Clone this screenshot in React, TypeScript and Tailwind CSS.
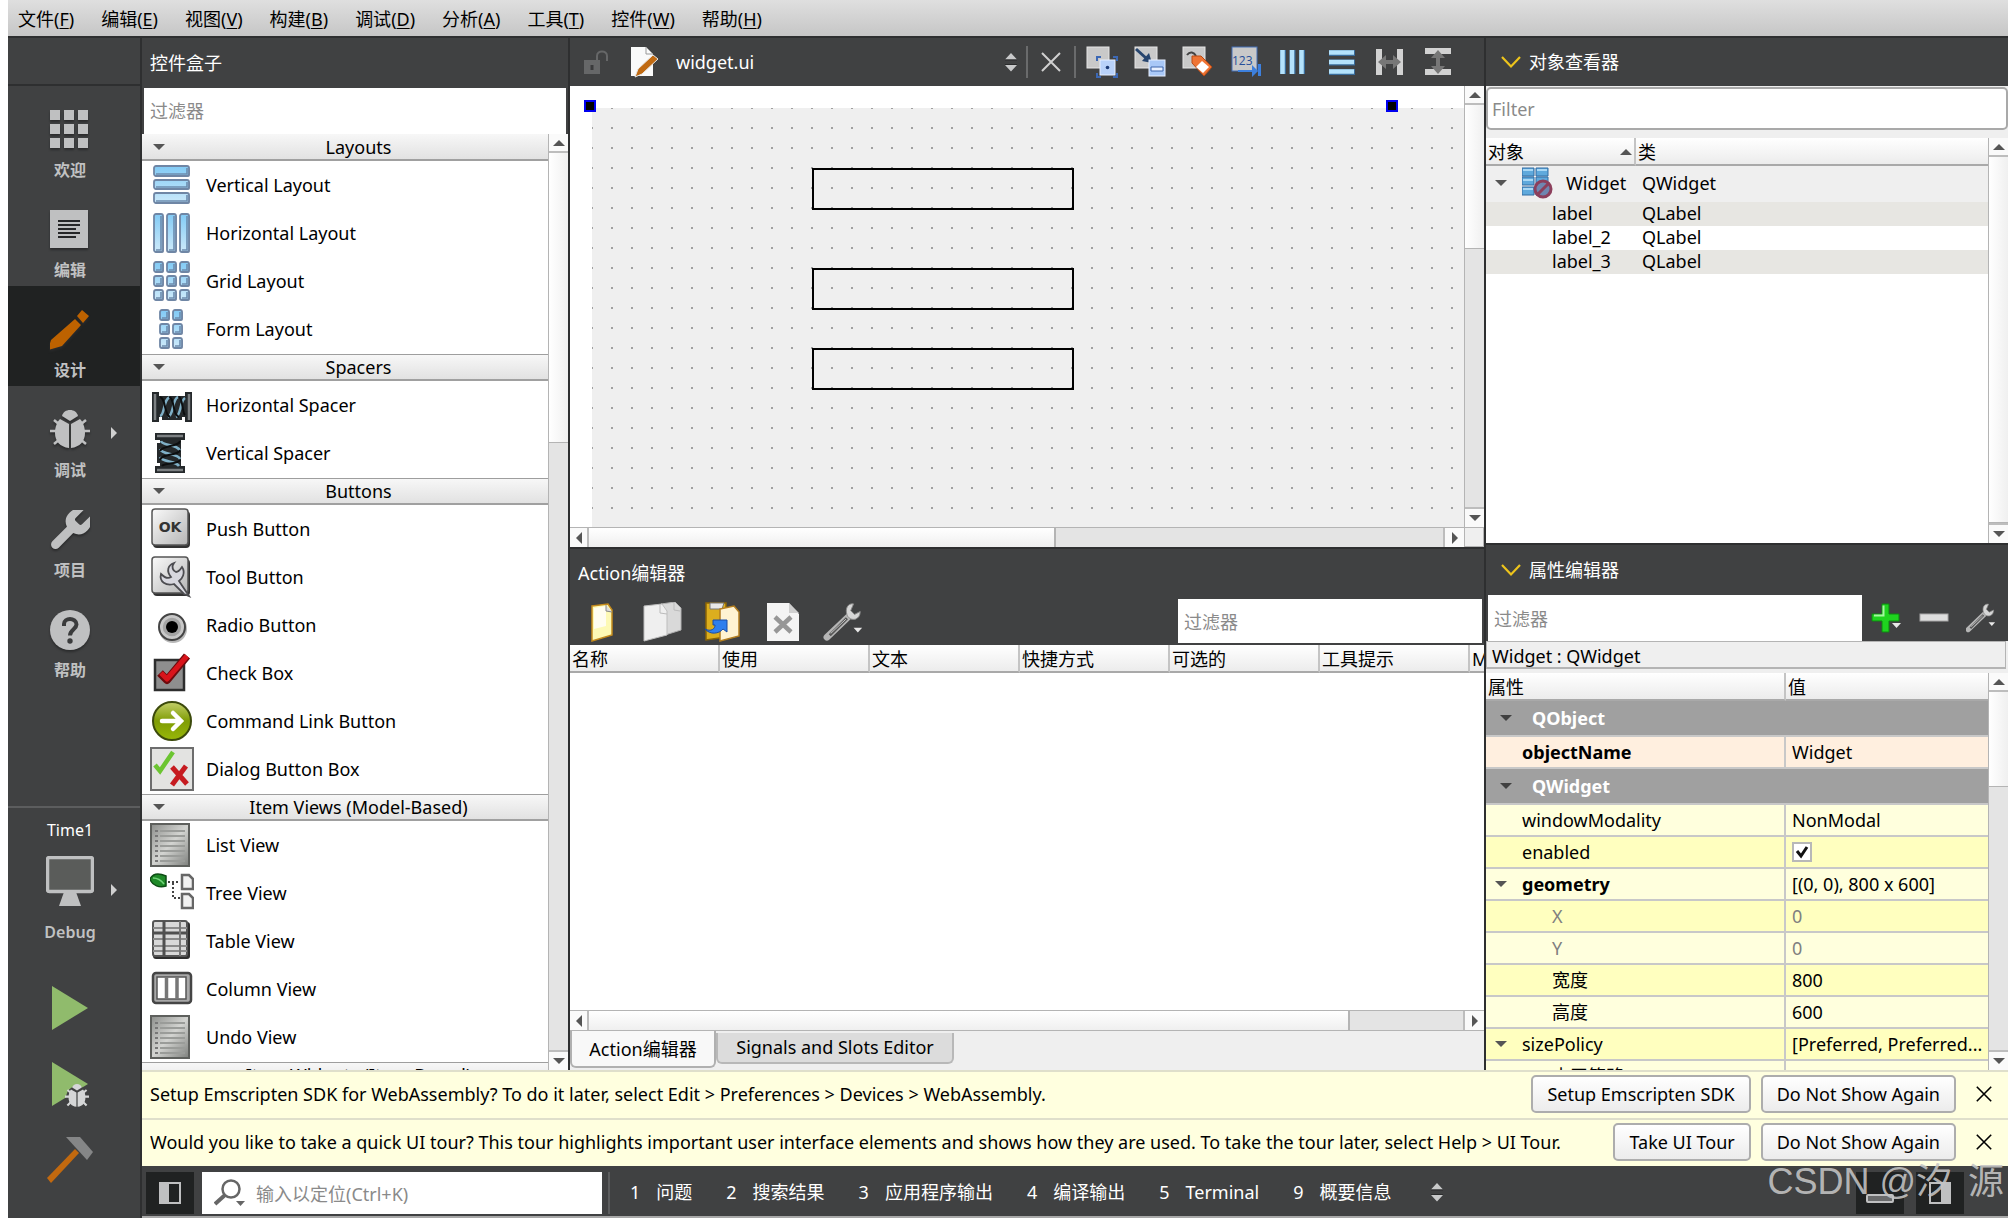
import { useState, type ReactNode } from "react";
import clsx from "clsx";

const menus = [
  ["文件", "F"],
  ["编辑", "E"],
  ["视图", "V"],
  ["构建", "B"],
  ["调试", "D"],
  ["分析", "A"],
  ["工具", "T"],
  ["控件", "W"],
  ["帮助", "H"],
];

const outputPanes = [
  ["1", "问题"],
  ["2", "搜索结果"],
  ["3", "应用程序输出"],
  ["4", "编译输出"],
  ["5", "Terminal"],
  ["9", "概要信息"],
];

/* ---------- small arrows ---------- */

function Arrow({ dir, className = "fill-[#555555]" }: { dir: "up" | "down" | "left" | "right"; className?: string }) {
  const points = {
    up: "0,9 12,9 6,3",
    down: "0,3 12,3 6,9",
    left: "9,0 9,12 3,6",
    right: "3,0 3,12 9,6",
  }[dir];

  return (
    <svg viewBox="0 0 12 12" className={clsx("size-3 shrink-0", className)}>
      <polygon points={points} />
    </svg>
  );
}

function UpDown() {
  return (
    <svg viewBox="0 0 12 20" className="h-5 w-3">
      <path d="M0 7.500 6 1l6 6.500zM0 13h12l-6 6.500z" fill="#c8c9ca" />
      <path d="M0 8h12M0 12.500h12" stroke="#2a2b2c" />
    </svg>
  );
}

function Close({ className }: { className?: string }) {
  return (
    <svg viewBox="0 0 20 20" className={className} fill="none" stroke="currentColor" strokeWidth="2">
      <path d="M1 1 19 19M19 1 1 19" />
    </svg>
  );
}

function Chevron() {
  return (
    <svg viewBox="0 0 20 14" className="h-[14px] w-5" fill="none" stroke="#edc41c" strokeWidth="2.200">
      <path d="M1 2 10 11.500 19 2" />
    </svg>
  );
}

/* ---------- scroll bars ---------- */

function VScroll({ thumb, track }: { thumb: number; track: number }) {
  return (
    <div className="flex w-5 shrink-0 flex-col border-l border-[#b4b4b4] bg-[#e4e4e4]">
      <div className="flex h-[19px] items-center justify-center border-b-2 border-[#bdbdbd] bg-[#fafafa]">
        <Arrow dir="up" />
      </div>
      <div className="border-b border-[#b4b4b4] bg-linear-to-r from-white to-[#f0f0f0]" style={{ flex: thumb }} />
      <div style={{ flex: track }} />
      <div className="flex h-5 items-center justify-center border-t-2 border-[#bdbdbd] bg-[#fafafa]">
        <Arrow dir="down" />
      </div>
    </div>
  );
}

function HScroll({ thumb, track, corner }: { thumb: number; track: number; corner?: boolean }) {
  return (
    <div className="flex h-5 shrink-0 border-t border-[#b4b4b4] bg-[#e4e4e4]">
      <div className="flex w-[19px] items-center justify-center border-r-2 border-[#bdbdbd] bg-[#fafafa]">
        <Arrow dir="left" />
      </div>
      <div className="border-r-2 border-[#b4b4b4] bg-linear-to-b from-white to-[#efefef]" style={{ flex: thumb }} />
      <div style={{ flex: track }} />
      <div className="flex w-[21px] items-center justify-center border-l-2 border-[#bdbdbd] bg-[#fafafa]">
        <Arrow dir="right" />
      </div>
      {corner && <div className="w-5 border border-t-0 border-[#b4b4b4] bg-[#efefef]" />}
    </div>
  );
}

/* ---------- mode bar icons ---------- */

const wrenchPath =
  "M14.7 6.3a1 1 0 0 0 0 1.4l1.6 1.6a1 1 0 0 0 1.4 0l3.770-3.770a6 6 0 0 1-7.940 7.940l-6.910 6.910a2.120 2.120 0 0 1-3-3l6.910-6.910a6 6 0 0 1 7.940-7.940l-3.760 3.760z";

const modeIconClass = "size-10 drop-shadow-[0_2px_1px_#2a2b2c]";

function WelcomeIcon() {
  return (
    <svg viewBox="0 0 40 40" className={modeIconClass} fill="#bfc0c1">
      {[0, 14, 28].map((y) => [0, 14, 28].map((x) => <rect key={`${x}-${y}`} x={x} y={y} width="10" height="10" />))}
    </svg>
  );
}

function EditIcon() {
  return (
    <svg viewBox="0 0 40 40" className={modeIconClass}>
      <path fill="#bfc0c1" d="M0 0h38v38H0z" />
      <path d="M8 11h22M8 15h22M8 19h18M8 23h22M8 27h18" stroke="#262728" strokeWidth="2" />
    </svg>
  );
}

function DesignIcon() {
  return (
    <svg viewBox="0 0 40 40" className={modeIconClass} fill="#bd6200">
      <path d="M25 9 31 15 12 36 -2 40 1 30zM27 6 32 0 39 6 33 13z" />
    </svg>
  );
}

function Bug({ className }: { className?: string }) {
  return (
    <svg viewBox="0 0 40 40" className={className}>
      <path d="M4 10 10 15M36 10l-6 5M0 21h8M40 21h-8M4 34l6-5M36 34l-6-5" stroke="#bfc0c1" strokeWidth="2.500" />
      <path d="M12 6C13 2 16 0 20 0s7 2 8 6l-8 5z" fill="#bfc0c1" />
      <path d="M10 9 19 14v24C10 37 5 31 5 23 5 17 7 12 10 9zM30 9 21 14v24c9-1 14-7 14-15 0-6-2-11-5-14z" fill="#bfc0c1" />
    </svg>
  );
}

function ProjectsIcon() {
  return (
    <svg viewBox="2.500 2.500 19 19" className={modeIconClass} fill="#bfc0c1">
      <path d={wrenchPath} />
    </svg>
  );
}

function HelpIcon() {
  return (
    <svg viewBox="0 0 40 40" className={modeIconClass}>
      <circle cx="20" cy="20" r="20" fill="#bfc0c1" />
      <path d="M14 16v-2c0-3 3-5 6-5s6.500 2 6.500 5.500c0 4.500-6.500 5-6.500 11" fill="none" stroke="#3a3b3c" strokeWidth="4" />
      <circle cx="20" cy="31" r="2.700" fill="#3a3b3c" />
    </svg>
  );
}

const modes: { label: string; icon: ReactNode; arrow?: boolean }[] = [
  { label: "欢迎", icon: <WelcomeIcon /> },
  { label: "编辑", icon: <EditIcon /> },
  { label: "设计", icon: <DesignIcon /> },
  { label: "调试", icon: <Bug className={modeIconClass} />, arrow: true },
  { label: "项目", icon: <ProjectsIcon /> },
  { label: "帮助", icon: <HelpIcon /> },
];

/* ---------- widget box icons ---------- */

function Blocks({ cells }: { cells: [number, number, number, number][] }) {
  return (
    <svg viewBox="0 0 44 44" className="size-11">
      <defs>
        <linearGradient id="block" x1="0" y1="0" x2="0" y2="44" gradientUnits="userSpaceOnUse">
          <stop offset="0" stopColor="#7cc8f5" />
          <stop offset="1" stopColor="#d3ecfa" />
        </linearGradient>
      </defs>
      {cells.map(([x, y, w, h]) => (
        <g key={`${x}-${y}`}>
          <rect x={x + 1} y={y + 1} width={w} height={h} rx="2" fill="#9aa6b8" />
          <rect x={x} y={y} width={w} height={h} rx="2" fill="url(#block)" stroke="#6f86a5" strokeWidth="1.800" />
          <path d={`M${x + w - 2} ${y + 2}v${h - 4}h${4 - w}`} fill="none" stroke="#6c8caf" strokeWidth="1.600" />
        </g>
      ))}
    </svg>
  );
}

function SpacerIcon({ vertical }: { vertical?: boolean }) {
  return (
    <svg viewBox="0 0 44 44" className="size-11">
      <g transform={vertical ? "translate(-2 0) rotate(90 22 22)" : "translate(0 2)"}>
        <path d="M2 7h7v4h26V7h7v30h-7v-5h-3v3H12v-3H9v5H2z" fill="#25292b" />
        <path d="M10 31C15 30 13 14 20 12M18 32c6-2 4-18 10-20M26 32c5-2 4-16 9-19" fill="none" stroke="#7fb0c7" strokeWidth="2.500" />
        <path d="M10 12c6 1 4 18 10 20M19 12c6 1 3 18 10 20M29 12c4 1 3 16 6 18" fill="none" stroke="#0c0e0f" strokeWidth="2" />
        <path d="M5 9v26M39 9v26" stroke="#7c8082" strokeWidth="2.500" />
      </g>
    </svg>
  );
}

function GreyButton({ children }: { children: ReactNode }) {
  return (
    <svg viewBox="0 0 44 44" className="size-11">
      <defs>
        <linearGradient id="grey-button" x1="0" y1="0" x2="1" y2="1">
          <stop offset="0" stopColor="#fafafa" />
          <stop offset="1" stopColor="#b5b5b5" />
        </linearGradient>
      </defs>
      <rect x="3" y="4" width="37" height="37" rx="4" fill="#333" />
      <rect x="2" y="2" width="36" height="36" rx="3" fill="url(#grey-button)" stroke="#555" strokeWidth="1.500" />
      {children}
    </svg>
  );
}

function RadioIcon() {
  return (
    <svg viewBox="0 0 44 44" className="size-11">
      <circle cx="23" cy="26" r="14" fill="#b8b8b8" />
      <circle cx="22" cy="24" r="13" fill="#c9c9c9" stroke="#444" strokeWidth="2" />
      <circle cx="22" cy="24" r="10" fill="#a4a4a4" stroke="#c8c8c8" strokeWidth="1.500" />
      <circle cx="22" cy="24" r="6" fill="#000" />
    </svg>
  );
}

function CheckIcon() {
  return (
    <svg viewBox="0 0 44 44" className="size-11">
      <rect x="5" y="9" width="29" height="30" fill="#8e8e8e" stroke="#2d2d2d" strokeWidth="2.500" />
      <path d="M10 22 17 29 37 5" fill="none" stroke="#6e0a0d" strokeWidth="8" strokeLinejoin="round" />
      <path d="M11 22 17 28 37 5" fill="none" stroke="#d9141b" strokeWidth="5" strokeLinejoin="round" />
    </svg>
  );
}

function CommandLinkIcon() {
  return (
    <svg viewBox="0 0 44 44" className="size-11">
      <defs>
        <linearGradient id="command" x1="0" y1="0" x2="0" y2="1">
          <stop offset="0" stopColor="#c4d06a" />
          <stop offset="0.500" stopColor="#7f9c05" />
          <stop offset="1" stopColor="#98b708" />
        </linearGradient>
      </defs>
      <circle cx="22" cy="22" r="19" fill="url(#command)" stroke="#3c4a0c" strokeWidth="2" />
      <path d="M12 22h19M23 14l8 8-8 8" fill="none" stroke="#fff" strokeWidth="4.500" strokeLinecap="round" />
    </svg>
  );
}

function DialogIcon() {
  return (
    <svg viewBox="0 0 44 44" className="size-11">
      <rect x="1" y="1" width="42" height="42" fill="#e3e3e1" stroke="#6d6d6d" strokeWidth="2" />
      <path d="M5 18 10 24 23 5" fill="none" stroke="#6cc531" strokeWidth="4.500" />
      <path d="M22 20 37 37M36 19 22 38" stroke="#c61b20" strokeWidth="5" />
    </svg>
  );
}

function ListIcon() {
  return (
    <svg viewBox="0 0 44 44" className="size-11">
      <defs>
        <linearGradient id="sheet" x1="0" y1="0" x2="1" y2="1">
          <stop offset="0" stopColor="#8d8f8c" />
          <stop offset="0.500" stopColor="#d3d4d1" />
          <stop offset="1" stopColor="#7e807d" />
        </linearGradient>
      </defs>
      <rect x="1" y="1" width="38" height="42" fill="url(#sheet)" stroke="#5e605d" strokeWidth="2" />
      <path d="M10 8h25M10 13h25M10 18h25M10 23h25M10 28h25M10 33h25M10 38h25" stroke="#9a9c99" strokeWidth="2" />
      <path d="M5 8h3M5 13h3M5 18h3M5 23h3M5 28h3M5 33h3M5 38h3" stroke="#777" strokeWidth="2" />
    </svg>
  );
}

function TreeIcon() {
  return (
    <svg viewBox="0 0 44 44" className="size-11">
      <path d="M0 8C3 2 9 2 16 5v10C10 17 2 15 0 8z" fill="#1f8a28" stroke="#0d4c14" strokeWidth="1.500" />
      <path d="M3 7c5 0 8 2 11 6" fill="none" stroke="#73d47a" strokeWidth="1.500" />
      <path d="M18 11h12M23 12v15h7" fill="none" stroke="#444" strokeWidth="2" strokeDasharray="2 2" />
      <path d="M32 4h7l4 4v10H32zM32 23h7l4 4v10H32z" fill="#f1f1f1" stroke="#666" strokeWidth="2.500" />
    </svg>
  );
}

function TableIcon() {
  return (
    <svg viewBox="0 0 44 44" className="size-11">
      <rect x="3" y="3" width="37" height="37" rx="3" fill="#2e2e2e" />
      <rect x="3" y="2" width="34" height="35" rx="2" fill="#d8d8d8" stroke="#555" strokeWidth="2" />
      <path d="M3 9h34M3 20h34M3 27h34M3 32h34" stroke="#8a8a8a" strokeWidth="2" />
      <path d="M14 2v35M3 14h34" stroke="#4f4f4f" strokeWidth="3" />
      <path d="M30 2v35" stroke="#777" strokeWidth="2" />
    </svg>
  );
}

function ColumnIcon() {
  return (
    <svg viewBox="0 0 44 44" className="size-11">
      <rect x="3" y="6" width="38" height="30" rx="3" fill="#a8a8a8" stroke="#454545" strokeWidth="2.500" />
      <rect x="7" y="10" width="29" height="22" fill="#fff" stroke="#555" strokeWidth="1.500" />
      <path d="M16.500 10v22M27 10v22" stroke="#777" strokeWidth="3.500" />
    </svg>
  );
}

const grid = (cols: number[]) => cols.flatMap((x) => [3, 17, 31].map((y) => [x, y, 9, 10] as [number, number, number, number]));

const groups: { title: string; items: [string, ReactNode][] }[] = [
  {
    title: "Layouts",
    items: [
      ["Vertical Layout", <Blocks cells={[[4, 3, 35, 10], [4, 17, 35, 9], [4, 30, 35, 10]]} />],
      ["Horizontal Layout", <Blocks cells={[[4, 3, 9, 38], [17, 3, 9, 38], [30, 3, 9, 38]]} />],
      ["Grid Layout", <Blocks cells={grid([4, 17, 30])} />],
      ["Form Layout", <Blocks cells={grid([10, 23])} />],
    ],
  },
  {
    title: "Spacers",
    items: [
      ["Horizontal Spacer", <SpacerIcon />],
      ["Vertical Spacer", <SpacerIcon vertical />],
    ],
  },
  {
    title: "Buttons",
    items: [
      [
        "Push Button",
        <GreyButton>
          <text x="20" y="25" textAnchor="middle" className="fill-[#333] font-['DejaVu_Sans'] text-[14px] font-bold">
            OK
          </text>
        </GreyButton>,
      ],
      [
        "Tool Button",
        <GreyButton>
          <path
            d="M24 8c-3 4-1 8 2 9 3 0 4-2 6-5 4 6 0 12-3 14l10 15-5-2-10-10c-8 2-15-2-13-10 4 4 7 5 10 3-5-6-3-12 3-14z"
            fill="#d7d7de"
            stroke="#4c4c50"
            strokeWidth="1.800"
          />
        </GreyButton>,
      ],
      ["Radio Button", <RadioIcon />],
      ["Check Box", <CheckIcon />],
      ["Command Link Button", <CommandLinkIcon />],
      ["Dialog Button Box", <DialogIcon />],
    ],
  },
  {
    title: "Item Views (Model-Based)",
    items: [
      ["List View", <ListIcon />],
      ["Tree View", <TreeIcon />],
      ["Table View", <TableIcon />],
      ["Column View", <ColumnIcon />],
      ["Undo View", <ListIcon />],
    ],
  },
  { title: "Item Widgets (Item-Based)", items: [] },
];

/* ---------- designer toolbar icons ---------- */

function ToolIcon({ children }: { children: ReactNode }) {
  return (
    <svg viewBox="0 0 32 32" className="size-8">
      {children}
    </svg>
  );
}

const sheetRect = <rect x="1" y="1" width="22" height="21" fill="#c9c9c9" stroke="#e6e6e6" />;

const designTools: [string, ReactNode][] = [
  [
    "Edit Widgets",
    <ToolIcon>
      {sheetRect}
      <path d="M11 15v-4h4M27 11h4v4M11 27v4h4M27 31h4v-4" fill="none" stroke="#3c68b5" strokeWidth="2" />
      <rect x="14" y="14" width="15" height="15" fill="#b9d2fa" stroke="#e7f0ff" />
      <circle cx="21.500" cy="21.500" r="1.800" fill="#1d3c78" />
    </ToolIcon>,
  ],
  [
    "Edit Signals/Slots",
    <ToolIcon>
      {sheetRect}
      <path d="M2 3 13 13" stroke="#28466f" strokeWidth="3" />
      <path d="M18 17 8 15l7-8z" fill="#28466f" />
      <rect x="15" y="14" width="16" height="16" fill="#a9c8f7" stroke="#e7f0ff" />
      <path d="M17 21v4h12v-4z" fill="#e8f0ff" stroke="#3e67ac" />
    </ToolIcon>,
  ],
  [
    "Edit Buddies",
    <ToolIcon>
      {sheetRect}
      <path d="M5 9c3-4 7-3 9 1" fill="none" stroke="#444" strokeWidth="2" />
      <path d="M10 10h9l11 11-8 9-12-13z" fill="#ef7434" stroke="#b84a14" />
      <path d="M20 15 27 21 21 27 14 21z" fill="#fff" />
    </ToolIcon>,
  ],
  [
    "Edit Tab Order",
    <ToolIcon>
      <rect x="2" y="1" width="25" height="24" fill="#c9c9c9" stroke="#4470b8" />
      <text x="2" y="19" className="fill-[#254f9a] font-['Open_Sans'] text-[12px]">
        123
      </text>
      <path d="M8 24h14v-5l6 6-6 6v-5H8zM28 18h3v12h-3z" fill="#3d80dd" />
    </ToolIcon>,
  ],
  [
    "Lay Out Horizontally",
    <ToolIcon>
      <path d="M5 4v24M14.500 4v24M24 4v24" stroke="#3a6c9b" strokeWidth="6" />
      <path d="M4.500 4v24M14 4v24M23.500 4v24" stroke="#b4e2fc" strokeWidth="4.500" />
    </ToolIcon>,
  ],
  [
    "Lay Out Vertically",
    <ToolIcon>
      <path d="M3 7h26M3 16.500h26M3 26h26" stroke="#3a6c9b" strokeWidth="6" />
      <path d="M3 6.500h25M3 16h25M3 25.500h25" stroke="#b4e2fc" strokeWidth="4.500" />
    </ToolIcon>,
  ],
  [
    "Lay Out Horizontally in Splitter",
    <ToolIcon>
      <path d="M5 3v26M26 3v26" stroke="#d2d2d2" strokeWidth="6" />
      <path d="M4 16l8-7v5h7V9l8 7-8 7v-5h-7v5z" fill="#777" />
    </ToolIcon>,
  ],
  [
    "Lay Out Vertically in Splitter",
    <ToolIcon>
      <path d="M3 5h26M3 26h26" stroke="#d2d2d2" strokeWidth="6" />
      <path d="M16 4l7 8h-5v8h5l-7 8-7-8h5v-8H9z" fill="#777" />
    </ToolIcon>,
  ],
];

function SpannerIcon({ className }: { className?: string }) {
  return (
    <svg viewBox="0 0 44 42" className={className}>
      <path d="M3 37 26 15" stroke="#b5b5b5" strokeWidth="7" strokeLinecap="round" />
      <path d="M6 35 24 17" stroke="#555" strokeWidth="3" />
      <path d="M7 33 23 18" stroke="#c8c8c8" strokeWidth="1" />
      <path d="M31 2c-6-1-9 5-7 11 1 4 5 6 9 5 3-1 5-4 5-8l-6 3-4-4z" fill="#d6d6d6" stroke="#888" />
      <path d="M31 27h9l-4.500 5z" fill="#e8e8e8" />
    </svg>
  );
}

const actionTools: [string, ReactNode][] = [
  [
    "New",
    <svg viewBox="0 0 40 40" className="size-10">
      <path d="M9 4 25 2l4 6v25L9 39z" fill="#fdf9b5" stroke="#c48a1c" strokeWidth="1.500" />
      <path d="M11 6 23 4v20l-12 3z" fill="#fffdf0" />
      <path d="M23 3v6l6 1" fill="#ddd" stroke="#888" />
    </svg>,
  ],
  [
    "Copy",
    <svg viewBox="0 0 40 40" className="size-10">
      <path d="M18 2 32 0l6 6v22l-16 5z" fill="#d9d9d9" stroke="#b0b0b0" />
      <path d="M1 4 19 2l5 7v24L1 39z" fill="#efefef" stroke="#bdbdbd" />
      <path d="M17 3v8l7 1M31 1v7l6 1" fill="none" stroke="#bbb" />
    </svg>,
  ],
  [
    "Paste",
    <svg viewBox="0 0 40 40" className="size-10">
      <path d="M3 1h20v34L3 38z" fill="#dcae1e" stroke="#8a6406" strokeWidth="1.500" />
      <path d="M7 1h14l-2 6H7z" fill="#e8e8e8" stroke="#777" />
      <path d="M17 7 31 4l5 6v24l-19 5z" fill="#fff3d2" stroke="#b37e20" strokeWidth="1.500" />
      <path d="M2 27c6 3 10 0 10-4h-2v-5h14v12l-4-3c-4 5-13 6-18 0z" fill="#2f7fee" stroke="#1c4da3" />
    </svg>,
  ],
  [
    "Delete",
    <svg viewBox="0 0 40 40" className="size-10">
      <path d="M4 1h22l10 11v27H4z" fill="#f4f4f4" />
      <path d="M26 1v10h10z" fill="#cfcfcf" />
      <path d="M12 15 28 30M28 15 12 30" stroke="#969696" strokeWidth="4.500" />
    </svg>,
  ],
  ["Configure", <SpannerIcon className="h-10 w-11" />],
];

/* ---------- panels ---------- */

function ModeBar() {
  const [current, setCurrent] = useState("设计");

  return (
    <nav className="flex w-[134px] shrink-0 flex-col border-r-2 border-[#2e2f30] bg-[#404142]">
      <div className="h-12 shrink-0 border-b-2 border-[#2e2f30]" />
      {modes.map((mode) => (
        <button
          key={mode.label}
          type="button"
          onClick={() => setCurrent(mode.label)}
          className={clsx(
            "relative flex h-[100px] shrink-0 flex-col items-center gap-2 pt-6 pr-2",
            current === mode.label && "bg-[#202222]"
          )}
        >
          {mode.icon}
          <span className="text-base leading-6 font-bold text-[#c0c1c2]">{mode.label}</span>
          {mode.arrow && (
            <span className="absolute top-[41px] right-5">
              <Arrow dir="right" className="fill-[#d0d0d0]" />
            </span>
          )}
        </button>
      ))}

      <div className="mt-auto flex flex-col items-center border-t-2 border-[#5c5d5e] pt-3 pr-2">
        <span className="text-base leading-5 text-white">Time1</span>
        <button type="button" className="relative mt-4 flex w-full flex-col items-center gap-3">
          <svg viewBox="0 0 48 52" className="h-[52px] w-12">
            <path d="M18 36h12l5 14H13z" fill="#bfc0c1" />
            <rect x="1.500" y="1.500" width="45" height="34" rx="2" fill="#5a5c5a" stroke="#bfc0c1" strokeWidth="3.500" />
          </svg>
          <span className="text-base leading-6 font-semibold text-[#c0c1c2]">Debug</span>
          <span className="absolute top-7 right-3">
            <Arrow dir="right" className="fill-[#d0d0d0]" />
          </span>
        </button>
        <button type="button" aria-label="运行" className="mt-10">
          <svg viewBox="0 0 48 48" className="size-12">
            <path d="M6 2 42 24 6 46z" fill="#90bb6c" />
          </svg>
        </button>
        <button type="button" aria-label="调试运行" className="mt-7 flex">
          <svg viewBox="0 0 48 48" className="size-12">
            <path d="M6 2 42 24 6 46z" fill="#90bb6c" />
            <ellipse cx="31" cy="38" rx="11" ry="12" fill="#404142" />
            <svg x="18" y="24" width="26" height="24" viewBox="0 0 40 40">
              <path d="M4 10 10 15M36 10l-6 5M0 21h8M40 21h-8M4 36l6-6M36 36l-6-6" stroke="#d5d6d7" strokeWidth="3.500" />
              <path d="M12 6C13 2 16 0 20 0s7 2 8 6l-8 5z" fill="#d5d6d7" />
              <path d="M10 9 19 14v24C10 37 6 31 6 23 6 17 7 12 10 9zM30 9 21 14v24c9-1 13-7 13-15 0-6-1-11-4-14z" fill="#d5d6d7" />
            </svg>
          </svg>
        </button>
        <button type="button" aria-label="构建" className="mt-7 mb-[34px]">
          <svg viewBox="0 0 48 48" className="size-12">
            <path d="M1 42 29 13l4 4L5 47z" fill="#c2690f" />
            <path d="M20 1h14l13 15-6 8z" fill="#858687" />
          </svg>
        </button>
      </div>
    </nav>
  );
}

function WidgetBox() {
  return (
    <section className="flex w-[428px] shrink-0 flex-col border-r-2 border-[#2e2f30]">
      <h2 className="flex h-[50px] shrink-0 items-center bg-[#404142] px-2 text-white">控件盒子</h2>
      <div className="flex bg-[#404142] px-[2px]">
        <input aria-label="过滤器" placeholder="过滤器" className="h-[46px] min-w-0 flex-1 bg-white px-[6px] placeholder:text-[#8a8a8a]" />
      </div>
      <div className="flex min-h-0 flex-1">
        <div className="min-w-0 flex-1 overflow-hidden bg-white">
          {groups.map((group, index) => (
            <div key={group.title}>
              <button
                type="button"
                className={clsx("flex h-7 w-full pb-px", index > 0 && "border-t border-[#9e9e9e]")}
              >
                <span className="flex h-full w-full items-center border-b-2 border-[#a0a0a0] bg-linear-to-b from-[#f7f7f7] to-[#e2e2e2] pl-[11px]">
                  <Arrow dir="down" />
                  <span className="flex-1 pl-1 text-center leading-6">{group.title}</span>
                </span>
              </button>
              {group.items.map(([name, icon]) => (
                <div key={name} className="flex h-12 items-center gap-3 pb-[2px] pl-2">
                  {icon}
                  <span>{name}</span>
                </div>
              ))}
            </div>
          ))}
        </div>
        <VScroll thumb={290} track={608} />
      </div>
    </section>
  );
}

function FormEditor() {
  return (
    <section className="flex min-h-0 flex-[510] flex-col">
      <div className="flex h-12 shrink-0 items-center bg-[#404142] pr-[30px] text-white">
        <svg viewBox="0 0 24 24" className="ml-[14px] size-6" fill="none" stroke="#666768">
          <path d="M13 10V6c0-6 10-6 10 0v5" strokeWidth="2" />
          <path d="M0 10h16v14H0z" fill="#666768" stroke="none" />
          <path d="M8 15v5" stroke="#3a3b3c" strokeWidth="3" />
        </svg>
        <svg viewBox="0 0 28 32" className="ml-[23px] h-8 w-7">
          <path d="M0 1h15l7 7v22H0z" fill="#fafafa" />
          <path d="M15 1v7h7" fill="none" stroke="#999" />
          <path d="M4 31 7 23 22 9l5 4L11 28z" fill="#c06a12" stroke="#e6e6e6" />
        </svg>
        <button type="button" className="ml-[17px] flex flex-1 items-center justify-between">
          widget.ui
          <UpDown />
        </button>
        <div className="ml-[9px] h-8 w-[2px] bg-[#6a6b6c]" />
        <button type="button" aria-label="关闭" className="mx-[13px] text-[#d0d0d0]">
          <Close className="size-5" />
        </button>
        <div className="mr-[10px] h-8 w-[2px] bg-[#6a6b6c]" />
        <div className="flex gap-4">
          {designTools.map(([name, icon]) => (
            <button key={name} type="button" aria-label={name}>
              {icon}
            </button>
          ))}
        </div>
      </div>

      <div className="flex min-h-0 flex-1">
        {/* free canvas: the form and the three labels placed on it */}
        <div className="relative min-w-0 flex-1 overflow-hidden bg-white">
          <div className="absolute top-[22px] right-0 bottom-0 left-[22px] bg-[#efefef] bg-[conic-gradient(from_270deg_at_2px_2px,#a0a0a0_25%,transparent_0)] bg-[length:20px_20px] bg-[position:-1px_-1px]">
            <div className="absolute top-[60px] left-[220px] h-[42px] w-[262px] border-2 border-black" />
            <div className="absolute top-[160px] left-[220px] h-[42px] w-[262px] border-2 border-black" />
            <div className="absolute top-[240px] left-[220px] h-[42px] w-[262px] border-2 border-black" />
          </div>
          <div className="absolute top-[14px] left-[14px] size-3 border-2 border-[#0000f0] bg-black" />
          <div className="absolute top-[14px] left-[816px] size-3 border-2 border-[#0000f0] bg-black" />
        </div>
        <VScroll thumb={144} track={260} />
      </div>
      <HScroll thumb={466} track={388} corner />
    </section>
  );
}

const thClass = "h-7 border-b-2 border-[#a9a9a9] bg-linear-to-b from-white to-[#ececec] px-[2px] pt-[2px] text-left align-middle font-normal";

function ActionEditor() {
  return (
    <section className="flex min-h-0 flex-[522] flex-col border-t-2 border-[#2e2f30]">
      <h2 className="flex h-12 shrink-0 items-center bg-[#404142] px-2 text-white">Action编辑器</h2>
      <div className="flex h-12 shrink-0 items-start bg-[#404142] pr-[2px] pl-3">
        <div className="flex flex-1 gap-5 pt-[5px] pl-px">
          {actionTools.map(([name, icon]) => (
            <button key={name} type="button" aria-label={name}>
              {icon}
            </button>
          ))}
        </div>
        <input aria-label="过滤器" placeholder="过滤器" className="mt-[2px] h-11 w-[304px] bg-white px-[6px] pt-[2px] placeholder:text-[#8a8a8a]" />
      </div>
      <div className="min-h-0 flex-1 overflow-hidden bg-white">
        <table className="w-[1050px] table-fixed border-separate border-spacing-0">
          <thead>
            <tr>
              {["名称", "使用", "文本", "快捷方式", "可选的", "工具提示", "MenuRole"].map((name) => (
                <th key={name} className={clsx(thClass, "border-r-2 border-r-[#c4c4c4]")}>
                  {name}
                </th>
              ))}
            </tr>
          </thead>
        </table>
      </div>
      <HScroll thumb={762} track={114} />
      <div className="flex h-10 shrink-0 items-start border-t border-[#b4b4b4] bg-[#efefef]">
        <button type="button" className="h-[37px] w-[146px] rounded-b-md border-2 border-t-0 border-[#b0b0b0] bg-[#f8f8f8]">
          Action编辑器
        </button>
        <button type="button" className="mt-[2px] h-[31px] w-[238px] rounded-b-md border-2 border-t-0 border-[#b8b8b8] bg-[#dcdcdc] pb-[2px]">
          Signals and Slots Editor
        </button>
      </div>
    </section>
  );
}

function ObjectInspector() {
  const objects = [
    ["label", "QLabel"],
    ["label_2", "QLabel"],
    ["label_3", "QLabel"],
  ];

  return (
    <section className="flex min-h-0 flex-[506] flex-col">
      <h2 className="flex h-12 shrink-0 items-center gap-2 bg-[#404142] pl-[15px] text-white">
        <Chevron />
        对象查看器
      </h2>
      <div className="flex h-[52px] shrink-0 items-start bg-[#efefef] pt-px">
        <input
          aria-label="Filter"
          placeholder="Filter"
          className="h-[43px] w-full rounded-[5px] border-2 border-[#a9a9a9] bg-white px-1 placeholder:text-[#8a8a8a]"
        />
      </div>
      <div className="flex min-h-0 flex-1 bg-white">
        <div className="min-w-0 flex-1 overflow-hidden">
          <table className="w-full table-fixed border-separate border-spacing-0">
            <colgroup>
              <col className="w-[150px]" />
              <col />
            </colgroup>
            <thead>
              <tr>
                <th className={clsx(thClass, "border-r-2 border-r-[#c4c4c4]")}>
                  <span className="flex items-center justify-between">
                    对象
                    <Arrow dir="up" />
                  </span>
                </th>
                <th className={thClass}>类</th>
              </tr>
            </thead>
            <tbody>
              <tr className="bg-[#efefef]">
                <td className="h-9 pb-[2px]">
                  <span className="flex items-center pl-[9px]">
                    <Arrow dir="down" />
                    <svg viewBox="0 0 32 32" className="mr-3 ml-[15px] size-8">
                      <path d="M0 1h12v8H0zM14 1h12v8H14zM0 10h12v8H0zM14 10h12v8H14zM0 20h12v8H0zM14 20h12v8H14z" fill="#5fa9dc" stroke="#336da3" />
                      <path d="M1 3h10M15 3h10M1 13h10M1 22h10" stroke="#a9d8f5" strokeWidth="2" />
                      <circle cx="21" cy="22" r="8" fill="#6f86b0" stroke="#8c3f5c" strokeWidth="3" />
                      <path d="M16 27 26 17" stroke="#8c3f5c" strokeWidth="3" />
                    </svg>
                    Widget
                  </span>
                </td>
                <td className="pb-[2px] pl-[6px]">QWidget</td>
              </tr>
              {objects.map(([name, cls], index) => (
                <tr key={name} className={index % 2 ? "bg-white leading-[22px]" : "bg-[#e7e6e2] leading-[22px]"}>
                  <td className="h-6 pb-[2px] pl-[66px]">{name}</td>
                  <td className="pb-[2px] pl-[6px]">{cls}</td>
                </tr>
              ))}
            </tbody>
          </table>
        </div>
        <VScroll thumb={1} track={0} />
      </div>
    </section>
  );
}

type Property = {
  name: string;
  value?: string;
  kind?: "group" | "check";
  bold?: boolean;
  expand?: boolean;
  child?: boolean;
  muted?: boolean;
  tone?: string;
};

const light = "bg-[#ffffdd]";
const deep = "bg-[#ffffbf]";

const properties: Property[] = [
  { name: "QObject", kind: "group" },
  { name: "objectName", value: "Widget", bold: true, tone: "bg-[#ffefdf]" },
  { name: "QWidget", kind: "group" },
  { name: "windowModality", value: "NonModal", tone: light },
  { name: "enabled", kind: "check", tone: deep },
  { name: "geometry", value: "[(0, 0), 800 x 600]", bold: true, expand: true, tone: light },
  { name: "X", value: "0", child: true, muted: true, tone: deep },
  { name: "Y", value: "0", child: true, muted: true, tone: light },
  { name: "宽度", value: "800", child: true, tone: deep },
  { name: "高度", value: "600", child: true, tone: light },
  { name: "sizePolicy", value: "[Preferred, Preferred...", expand: true, tone: deep },
  { name: "水平策略", child: true, tone: light },
];

function PropertyRow({ property }: { property: Property }) {
  if (property.kind === "group") {
    return (
      <tr className="bg-[#a0a0a0]">
        <th colSpan={2} className="h-9 border-b-2 border-[#c8c8c8] pl-[14px] text-left text-white">
          <span className="flex items-center gap-5">
            <Arrow dir="down" className="fill-[#404040]" />
            {property.name}
          </span>
        </th>
      </tr>
    );
  }

  return (
    <tr className={clsx(property.tone, property.muted && "text-[#808080]")}>
      <td className={clsx("h-8 border-r-2 border-b-2 border-[#c8c8c8]", property.child ? "pl-[66px]" : "pl-[9px]")}>
        <span className={clsx("flex items-center", property.bold && "font-bold")}>
          {!property.child && (
            <span className="flex w-[27px]">{property.expand && <Arrow dir="down" />}</span>
          )}
          {property.kind === "check" ? <label htmlFor={property.name}>{property.name}</label> : property.name}
        </span>
      </td>
      <td className="overflow-hidden border-b-2 border-[#c8c8c8] pl-[6px] whitespace-nowrap">
        {property.kind === "check" ? (
          <span className="grid size-5">
            <input
              id={property.name}
              type="checkbox"
              defaultChecked
              className="peer col-start-1 row-start-1 size-5 appearance-none border-2 border-[#b8b8b8] bg-white"
            />
            <svg viewBox="0 0 20 20" className="pointer-events-none invisible col-start-1 row-start-1 peer-checked:visible">
              <path d="M5 9 9 14 15 5" fill="none" stroke="#111" strokeWidth="3" />
            </svg>
          </span>
        ) : (
          property.value
        )}
      </td>
    </tr>
  );
}

function PropertyEditor() {
  return (
    <section className="flex min-h-0 flex-[526] flex-col border-t-2 border-[#2e2f30]">
      <h2 className="flex h-[50px] shrink-0 items-center gap-2 bg-[#404142] pl-[15px] text-white">
        <Chevron />
        属性编辑器
      </h2>
      <div className="flex h-[46px] shrink-0 items-center bg-[#404142] pr-[10px] pl-[2px]">
        <input aria-label="过滤器" placeholder="过滤器" className="h-full min-w-0 flex-1 bg-white px-[6px] pt-[2px] placeholder:text-[#8a8a8a]" />
        <div className="ml-2 flex gap-4">
          <button type="button" aria-label="添加动态属性">
            <svg viewBox="0 0 32 32" className="size-8">
              <path d="M12 2h7v10h10v7H19v11h-7V19H2v-7h10z" fill="#1fd41f" stroke="#0d8a10" />
              <path d="M13.500 3.500v10H4" fill="none" stroke="#a5f7a0" strokeWidth="2" />
              <path d="M22 21h9l-4.500 5z" fill="#e8e8e8" />
            </svg>
          </button>
          <button type="button" aria-label="删除动态属性">
            <svg viewBox="0 0 32 32" className="size-8">
              <rect x="2" y="12" width="28" height="7" fill="#dedede" stroke="#a8a8a8" />
            </svg>
          </button>
          <button type="button" aria-label="配置">
            <SpannerIcon className="size-8" />
          </button>
        </div>
      </div>
      <div className="shrink-0 bg-[#efefef] pr-[2px] pb-1">
        <div className="flex h-7 items-center border border-b-2 border-[#b4b4b4] px-[5px] pt-[2px]">Widget : QWidget</div>
      </div>
      <div className="flex min-h-0 flex-1">
        <div className="min-w-0 flex-1 overflow-hidden bg-[#ffffdd]">
          <table className="w-full table-fixed border-separate border-spacing-0">
            <colgroup>
              <col className="w-[300px]" />
              <col />
            </colgroup>
            <thead>
              <tr>
                <th className={clsx(thClass, "border-r-2 border-r-[#c4c4c4]")}>属性</th>
                <th className={thClass}>值</th>
              </tr>
            </thead>
            <tbody>
              {properties.map((property) => (
                <PropertyRow key={property.name} property={property} />
              ))}
            </tbody>
          </table>
        </div>
        <VScroll thumb={94} track={264} />
      </div>
    </section>
  );
}

function InfoBar({ text, action, onClose }: { text: string; action: string; onClose: () => void }) {
  const button = "h-[38px] rounded-[5px] border-2 border-[#adadad] bg-linear-to-b from-white to-[#ececec] px-[14px]";

  return (
    <div className="flex h-12 shrink-0 items-center gap-[10px] border-t-2 border-[#dfdfcb] bg-[#ffffdf] pr-4 pb-[2px] pl-2">
      <p className="min-w-0 flex-1 truncate">{text}</p>
      <button type="button" className={button}>
        {action}
      </button>
      <button type="button" className={button}>
        Do Not Show Again
      </button>
      <button type="button" aria-label="关闭" onClick={onClose} className="ml-[10px]">
        <Close className="size-4" />
      </button>
    </div>
  );
}

function StatusBar() {
  return (
    <footer className="relative flex h-[52px] shrink-0 items-center overflow-hidden border-b-2 border-[#a8a8a8] bg-[#404142] pl-1 text-white">
      <button type="button" aria-label="显示左侧边栏" className="mt-1 flex h-[42px] w-12 items-center justify-center bg-[#202222]">
        <svg viewBox="0 0 22 22" className="size-[22px]">
          <path d="M0 0h22v22H0z" fill="#bfc0c1" />
          <path d="M10 2h10v18H10z" fill="#202222" />
        </svg>
      </button>
      <label className="mt-1 ml-2 flex h-[42px] w-[400px] items-center gap-[10px] bg-white pl-3">
        <svg viewBox="0 0 32 28" className="h-7 w-8" fill="none" stroke="#666" strokeWidth="2.500">
          <circle cx="17" cy="10" r="8.500" />
          <path d="M11 16 1 25" strokeWidth="4" />
          <path d="M22 22h9l-4.500 5z" fill="#666" stroke="none" />
        </svg>
        <input aria-label="定位" placeholder="输入以定位(Ctrl+K)" className="h-full min-w-0 flex-1 pt-[2px] text-black placeholder:text-[#8a8a8a]" />
      </label>
      <div className="mt-1 ml-[6px] h-[42px] w-[2px] bg-[#5c5d5e]" />
      <div className="ml-5 flex items-center gap-[34px] pt-[2px]">
        {outputPanes.map(([key, name]) => (
          <button key={key} type="button" className="flex gap-4">
            <span>{key}</span>
            <span>{name}</span>
          </button>
        ))}
        <span className="ml-[6px]">
          <UpDown />
        </span>
      </div>
      <div className="mt-1 mr-11 ml-auto flex gap-3">
        <button type="button" aria-label="显示输出窗格" className="flex h-[42px] w-12 items-center justify-center bg-[#202222]">
          <svg viewBox="0 0 28 22" className="h-[22px] w-7">
            <rect x="1" y="13" width="26" height="7" rx="1" fill="#6a6b6c" stroke="#bfc0c1" strokeWidth="2" />
          </svg>
        </button>
        <button type="button" aria-label="显示右侧边栏" className="flex h-[42px] w-12 items-center justify-center bg-[#202222]">
          <svg viewBox="0 0 22 22" className="size-[22px]">
            <path d="M0 0h22v22H0z" fill="#bfc0c1" />
            <path d="M2 2h10v18H2z" fill="#202222" />
          </svg>
        </button>
      </div>
    </footer>
  );
}

export default function App() {
  const [infos, setInfos] = useState([
    {
      text: "Setup Emscripten SDK for WebAssembly? To do it later, select Edit > Preferences > Devices > WebAssembly.",
      action: "Setup Emscripten SDK",
    },
    {
      text: "Would you like to take a quick UI tour? This tour highlights important user interface elements and shows how they are used. To take the tour later, select Help > UI Tour.",
      action: "Take UI Tour",
    },
  ]);

  return (
    <div className="relative flex h-screen flex-col overflow-hidden bg-white pl-2 font-['Noto_Sans','Noto_Sans_CJK_SC',sans-serif] text-[18px] leading-6 text-black">
      <header className="flex h-[38px] shrink-0 items-center gap-[27px] border-b-2 border-[#2e2f30] bg-linear-to-b from-[#dfdfdf] to-[#c6c6c6] px-[10px] pt-[2px]">
        {menus.map(([name, key]) => (
          <button key={name + key} type="button">
            {name}(<u className="underline-offset-2">{key}</u>)
          </button>
        ))}
      </header>

      <div className="flex min-h-0 flex-1">
        <ModeBar />
        <div className="flex min-w-0 flex-1 flex-col">
          <main className="flex min-h-0 flex-1">
            <WidgetBox />
            <div className="flex min-w-0 flex-1 flex-col">
              <FormEditor />
              <ActionEditor />
            </div>
            <aside className="flex w-[524px] shrink-0 flex-col border-l-2 border-[#2e2f30]">
              <ObjectInspector />
              <PropertyEditor />
            </aside>
          </main>
          {infos.map((info) => (
            <InfoBar
              key={info.action}
              text={info.text}
              action={info.action}
              onClose={() => setInfos(infos.filter((item) => item !== info))}
            />
          ))}
          <StatusBar />
        </div>
      </div>

      <div className="pointer-events-none absolute right-1 bottom-4 flex gap-4 font-['Liberation_Sans','Noto_Sans_CJK_SC',sans-serif] text-[36px] leading-10 text-[#c4c4c4]/90">
        <span>CSDN @汐</span>
        <span>源</span>
      </div>
    </div>
  );
}
